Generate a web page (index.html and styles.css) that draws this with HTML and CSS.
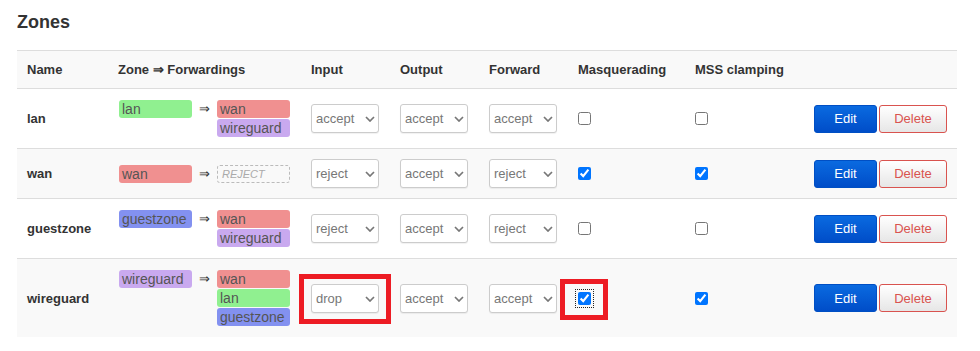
FILE: index.html
```html
<!DOCTYPE html>
<html lang="en">
<head>
    <meta charset="UTF-8">
    <meta name="viewport" content="width=device-width, initial-scale=1.0">
    <title>Firewall - Zones</title>
    <link rel="stylesheet" href="styles.css">
</head>
<body>
<div class="page">
    <h3 class="section-title">Zones</h3>
    <table class="zone-table">
        <colgroup>
            <col class="col-name">
            <col class="col-zone">
            <col class="col-policy">
            <col class="col-policy">
            <col class="col-policy">
            <col class="col-masq">
            <col class="col-mss">
            <col class="col-actions">
        </colgroup>
        <thead>
            <tr>
                <th>Name</th>
                <th>Zone &rArr; Forwardings</th>
                <th>Input</th>
                <th>Output</th>
                <th>Forward</th>
                <th>Masquerading</th>
                <th>MSS clamping</th>
                <th></th>
            </tr>
        </thead>
        <tbody>
            <tr>
                <td class="zone-name">lan</td>
                <td class="zone-flow">
                    <div class="flow">
                        <span class="badge badge-lan">lan</span>
                        <span class="flow-arrow">&rArr;</span>
                        <div class="flow-dest">
                            <span class="badge badge-wan">wan</span>
                            <span class="badge badge-wireguard">wireguard</span>
                        </div>
                    </div>
                </td>
                <td><span class="select"><select><option>accept</option></select><svg class="select-arrow" viewBox="0 0 10 6"><path d="M1 1l4 4 4-4"/></svg></span></td>
                <td><span class="select"><select><option>accept</option></select><svg class="select-arrow" viewBox="0 0 10 6"><path d="M1 1l4 4 4-4"/></svg></span></td>
                <td><span class="select"><select><option>accept</option></select><svg class="select-arrow" viewBox="0 0 10 6"><path d="M1 1l4 4 4-4"/></svg></span></td>
                <td><span class="check"><input type="checkbox"></span></td>
                <td><span class="check"><input type="checkbox"></span></td>
                <td class="actions"><button class="btn btn-edit">Edit</button><button class="btn btn-delete">Delete</button></td>
            </tr>
            <tr>
                <td class="zone-name">wan</td>
                <td class="zone-flow">
                    <div class="flow">
                        <span class="badge badge-wan">wan</span>
                        <span class="flow-arrow">&rArr;</span>
                        <div class="flow-dest">
                            <span class="badge badge-reject">REJECT</span>
                        </div>
                    </div>
                </td>
                <td><span class="select"><select><option>reject</option></select><svg class="select-arrow" viewBox="0 0 10 6"><path d="M1 1l4 4 4-4"/></svg></span></td>
                <td><span class="select"><select><option>accept</option></select><svg class="select-arrow" viewBox="0 0 10 6"><path d="M1 1l4 4 4-4"/></svg></span></td>
                <td><span class="select"><select><option>reject</option></select><svg class="select-arrow" viewBox="0 0 10 6"><path d="M1 1l4 4 4-4"/></svg></span></td>
                <td><span class="check"><input type="checkbox" checked></span></td>
                <td><span class="check"><input type="checkbox" checked></span></td>
                <td class="actions"><button class="btn btn-edit">Edit</button><button class="btn btn-delete">Delete</button></td>
            </tr>
            <tr>
                <td class="zone-name">guestzone</td>
                <td class="zone-flow">
                    <div class="flow">
                        <span class="badge badge-guest">guestzone</span>
                        <span class="flow-arrow">&rArr;</span>
                        <div class="flow-dest">
                            <span class="badge badge-wan">wan</span>
                            <span class="badge badge-wireguard">wireguard</span>
                        </div>
                    </div>
                </td>
                <td><span class="select"><select><option>reject</option></select><svg class="select-arrow" viewBox="0 0 10 6"><path d="M1 1l4 4 4-4"/></svg></span></td>
                <td><span class="select"><select><option>accept</option></select><svg class="select-arrow" viewBox="0 0 10 6"><path d="M1 1l4 4 4-4"/></svg></span></td>
                <td><span class="select"><select><option>reject</option></select><svg class="select-arrow" viewBox="0 0 10 6"><path d="M1 1l4 4 4-4"/></svg></span></td>
                <td><span class="check"><input type="checkbox"></span></td>
                <td><span class="check"><input type="checkbox"></span></td>
                <td class="actions"><button class="btn btn-edit">Edit</button><button class="btn btn-delete">Delete</button></td>
            </tr>
            <tr>
                <td class="zone-name">wireguard</td>
                <td class="zone-flow">
                    <div class="flow">
                        <span class="badge badge-wireguard">wireguard</span>
                        <span class="flow-arrow">&rArr;</span>
                        <div class="flow-dest">
                            <span class="badge badge-wan">wan</span>
                            <span class="badge badge-lan">lan</span>
                            <span class="badge badge-guest">guestzone</span>
                        </div>
                    </div>
                </td>
                <td><span class="select"><select><option>drop</option></select><svg class="select-arrow" viewBox="0 0 10 6"><path d="M1 1l4 4 4-4"/></svg><span class="mark mark-select"></span></span></td>
                <td><span class="select"><select><option>accept</option></select><svg class="select-arrow" viewBox="0 0 10 6"><path d="M1 1l4 4 4-4"/></svg></span></td>
                <td><span class="select"><select><option>accept</option></select><svg class="select-arrow" viewBox="0 0 10 6"><path d="M1 1l4 4 4-4"/></svg></span></td>
                <td><span class="check"><input type="checkbox" class="is-focused" checked><span class="mark mark-check"></span></span></td>
                <td><span class="check"><input type="checkbox" checked></span></td>
                <td class="actions"><button class="btn btn-edit">Edit</button><button class="btn btn-delete">Delete</button></td>
            </tr>
        </tbody>
    </table>
</div>
</body>
</html>
```

FILE: styles.css
```css
:root {
    --text: #333;
    --muted: #777;
    --line: #ddd;
    --stripe: #f9f9f9;
    --lan: #90f090;
    --wan: #f09090;
    --wireguard: #c9a9ef;
    --guest: #8391f0;
    --mark: #ed1c24;
}
* {
    margin: 0;
    padding: 0;
    box-sizing: border-box;
}
body {
    font-family: 'Liberation Sans', Arial, sans-serif;
    font-size: 13px;
    color: var(--text);
    background: #fff;
}
.page {
    padding: 12px 23px 0 17px;
}
.section-title {
    font-size: 18px;
    line-height: 21px;
    font-weight: bold;
    margin-bottom: 17px;
}
.zone-table {
    width: 940px;
    border-collapse: collapse;
    table-layout: fixed;
}
.col-name { width: 91px; }
.col-zone { width: 193px; }
.col-policy { width: 89px; }
.col-masq { width: 117px; }
.col-mss { width: 118px; }
.col-actions { width: 154px; }
.zone-table th,
.zone-table td {
    padding: 10px;
    border-top: 1px solid var(--line);
    text-align: left;
    vertical-align: middle;
    line-height: 17px;
}
.zone-table thead tr {
    background: var(--stripe);
}
.zone-table th {
    font-weight: bold;
}
.zone-table tbody tr:nth-child(even) {
    background: var(--stripe);
}
.zone-name {
    font-weight: bold;
}
.zone-table td.zone-flow {
    padding-bottom: 11px;
}
.flow {
    display: flex;
    align-items: flex-start;
    padding-left: 1px;
}
.flow-dest {
    display: flex;
    flex-direction: column;
}
.flow-arrow {
    width: 25px;
    margin-top: 1px;
    line-height: 17px;
    text-align: center;
    font-size: 13px;
}
.badge {
    display: block;
    width: 73px;
    height: 18px;
    margin-top: 1px;
    padding: 0 3px;
    border-radius: 3px;
    font-size: 14px;
    line-height: 18px;
    color: #555;
    white-space: nowrap;
}
.badge-lan { background: var(--lan); }
.badge-wan { background: var(--wan); }
.badge-wireguard { background: var(--wireguard); }
.badge-guest { background: var(--guest); }
.badge-reject {
    border: 1px dashed #bbb;
    padding: 0 4px;
    font-size: 11px;
    line-height: 16px;
    font-style: italic;
    color: #aaa;
}
.select {
    position: relative;
    display: block;
    width: 68px;
    height: 29px;
}
.select select {
    appearance: none;
    -webkit-appearance: none;
    width: 100%;
    height: 100%;
    padding: 0 16px 0 4px;
    border: 1px solid #ccc;
    border-radius: 3px;
    background: #fff;
    box-shadow: 0 1px 1px rgba(0, 0, 0, 0.06);
    font-family: inherit;
    font-size: 13px;
    color: var(--muted);
}
.select-arrow {
    position: absolute;
    right: 4px;
    top: 12px;
    width: 10px;
    height: 6px;
    fill: none;
    stroke: #777;
    stroke-width: 1.7;
    pointer-events: none;
}
.check {
    position: relative;
    display: block;
    width: 13px;
    height: 13px;
}
.check input {
    display: block;
    width: 13px;
    height: 13px;
    margin: 0;
}
.check input.is-focused {
    outline: 1px dotted #222;
    outline-offset: 2px;
}
.mark {
    position: absolute;
    border: 5px solid var(--mark);
    pointer-events: none;
}
.mark-select {
    left: -12px;
    top: -10px;
    width: 92px;
    height: 50px;
}
.mark-check {
    left: -18px;
    top: -13px;
    width: 48px;
    height: 41px;
}
.actions {
    text-align: right;
    white-space: nowrap;
}
.zone-table td.actions {
    text-align: right;
}
.btn {
    display: inline-block;
    height: 28px;
    border-radius: 3px;
    font-family: inherit;
    font-size: 13px;
    vertical-align: middle;
    cursor: pointer;
}
.btn-edit {
    width: 63px;
    border: 1px solid #004fc4;
    background: linear-gradient(#0a6ae0, #004dc8);
    color: #fff;
}
.btn-delete {
    width: 68px;
    margin-left: 2px;
    border: 1px solid #d9534f;
    background: linear-gradient(#fff, #e6e6e6);
    color: #d9534f;
}
```
